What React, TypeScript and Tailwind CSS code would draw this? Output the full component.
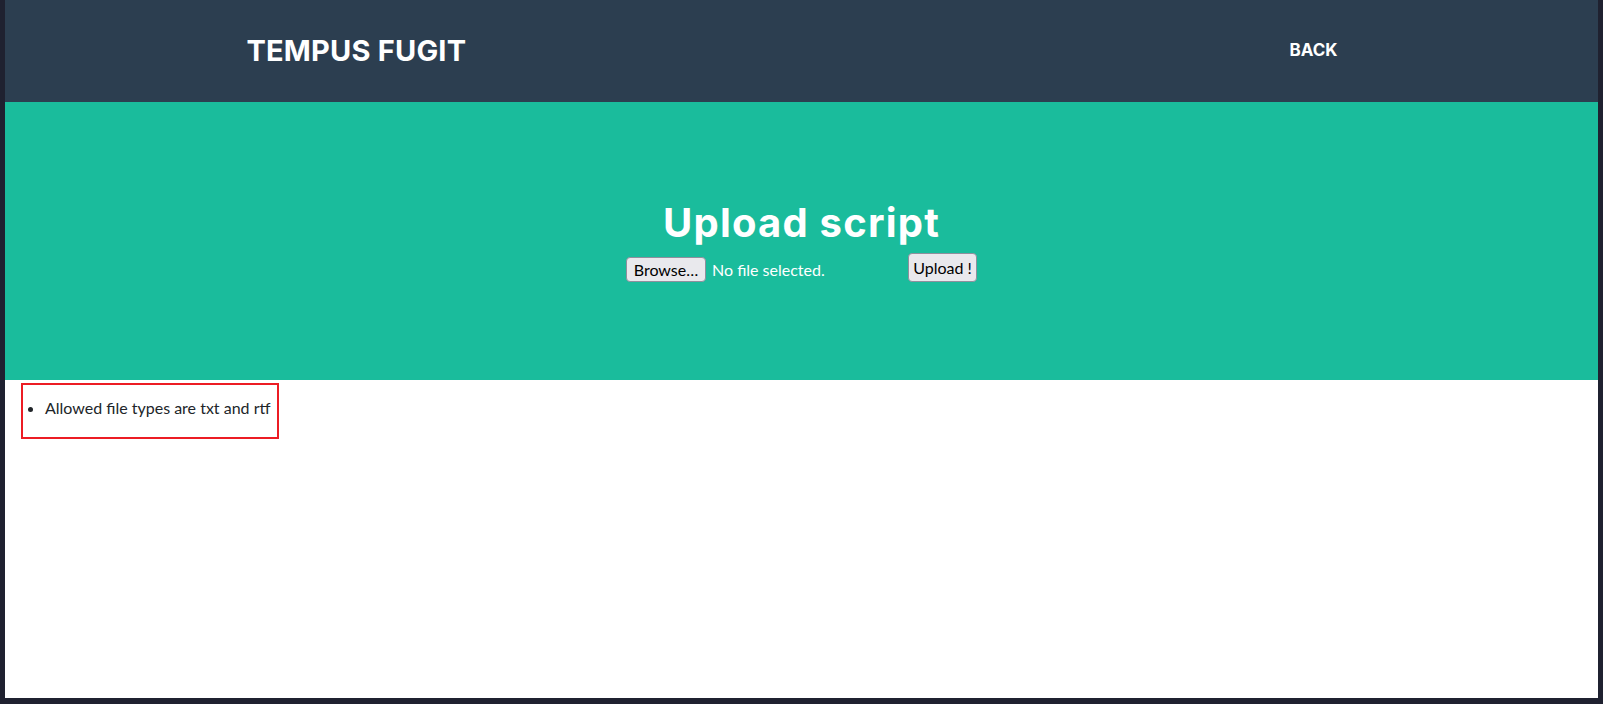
import React from "react"

const heading = "font-['Inter','Open_Sans',sans-serif] font-bold"
const body = "font-['Lato','Open_Sans',sans-serif]"

function FileButton({ label, className = "" }: { label: string; className?: string }) {
  return (
    <span
      className={`inline-flex items-center justify-center rounded-[4px] border border-[#8f8f9d] bg-[#e9e9ed] text-[16px] leading-none text-black ${className}`}
    >
      {label}
    </span>
  )
}

export default function App() {
  return (
    <div className="flex h-[704px] w-full flex-col bg-[#1f2130]">
      <div className={`mx-[5px] flex h-[698px] flex-col bg-white ${body}`}>
        {/* navbar */}
        <header className="h-[102px] shrink-0 bg-[#2c3e50]">
          <div className="mx-auto flex h-full w-[1140px] items-center justify-between pl-[15px] pr-[34px]">
            <span className={`${heading} text-[29px] tracking-[0.2px] text-white`}>TEMPUS FUGIT</span>
            <a className={`${heading} text-[17px] text-white`}>BACK</a>
          </div>
        </header>

        {/* masthead */}
        <section className="flex h-[278px] shrink-0 flex-col items-center bg-[#1abc9c] pt-[97px]">
          <h1 className={`${heading} text-[40px] leading-[48px] tracking-[1.2px] text-white`}>Upload script</h1>
          <form className="mt-[6px] flex items-end">
            <div className="flex w-[278px] items-center">
              <FileButton label="Browse…" className="h-[25px] w-[80px]" />
              <span className="ml-[6px] text-[16px] text-white">No file selected.</span>
            </div>
            <FileButton label="Upload !" className="ml-[4px] h-[29px] w-[69px]" />
          </form>
        </section>

        {/* notes */}
        <div className="pl-[16px] pt-[3px]">
          <div className="h-[56px] w-[258px] border-2 border-[#ec1c24] pl-[10px] pt-[11px]">
            <ul className="list-disc pl-[12px] text-[16px] text-[#212529]">
              <li>Allowed file types are txt and rtf</li>
            </ul>
          </div>
        </div>
      </div>
    </div>
  )
}
